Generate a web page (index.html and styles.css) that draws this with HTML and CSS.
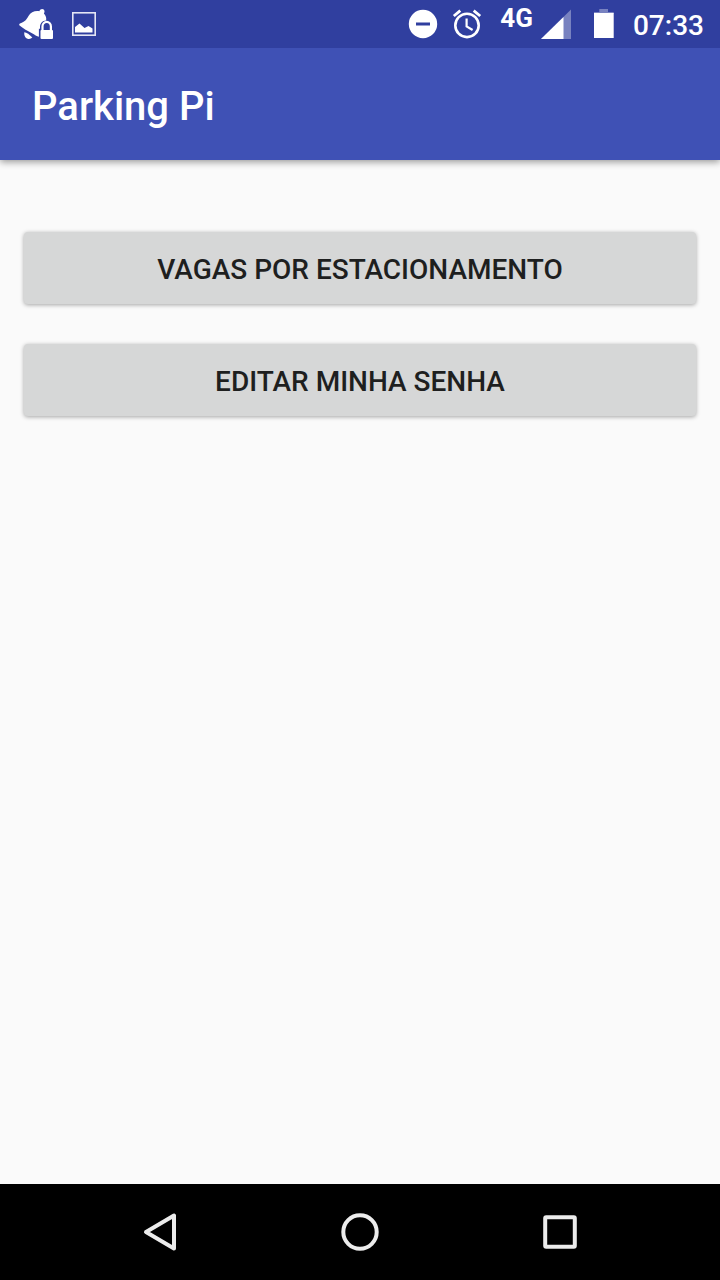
FILE: index.html
```html
<!DOCTYPE html>
<html lang="pt-BR">
<head>
<meta charset="utf-8">
<meta name="viewport" content="width=device-width, initial-scale=1">
<title>Parking Pi</title>
<link rel="stylesheet" href="styles.css">
</head>
<body class="screen">
<div class="status-bar">
  <div class="notifications">
    <svg class="icon-bell" viewBox="18 0 36 48" aria-hidden="true">
      <path fill="#fff" d="M19.300 25.200C19 24.300 19.500 23.600 20.600 23.200C25.500 21.500 26.500 19.500 28.500 16C30.800 12.200 34.500 10.600 39.300 11.200C40.200 9 42.400 8.400 43.700 9.600C44.900 10.800 44.700 12.500 43.900 13.600C46 16 46.600 18.500 46.100 20.400C42.500 20.500 40.300 23 40 26.500V28.700H38.900V36.700C37 36.400 34.500 34.800 32 33.300C28 31 23 28.500 19.300 25.200Z"/>
      <path fill="#fff" d="M24.200 32.200Q28 32.500 32.300 37.600Q30.500 39.500 27.500 38.800Q24 37.600 24.200 32.200Z"/>
      <path fill="none" stroke="#fff" stroke-width="2.200" d="M42.500 31V26.500A4.200 4.600 0 0 1 50.900 26.500V31"/>
      <rect x="40.500" y="30" width="12.500" height="9" rx="1" fill="#fff"/>
    </svg>
    <svg class="icon-picture" viewBox="70 0 28 48" aria-hidden="true">
      <rect x="72.800" y="12.800" width="22.400" height="22.400" fill="none" stroke="#e4e6f5" stroke-width="1.600"/>
      <path fill="#fff" d="M75 32.500V27L79.500 23.500L84.500 28L88.500 26L92.500 28.500V32.500Z"/>
    </svg>
  </div>
  <div class="indicators">
    <svg class="icon-round" viewBox="408 0 30 48" aria-hidden="true">
      <circle cx="423" cy="24" r="14.200" fill="#fff"/>
      <rect x="416" y="22.500" width="14" height="3" fill="#303f9f"/>
    </svg>
    <svg class="icon-round" viewBox="452 0 30 48" aria-hidden="true">
      <g fill="none" stroke="#fff">
        <circle cx="467" cy="25.400" r="11.700" stroke-width="2.600"/>
        <path stroke-width="2.200" d="M466.600 18.500V26.400L472.600 30"/>
        <path stroke-width="2.800" d="M453.800 16L460.300 10.600M480.200 16L473.700 10.600"/>
      </g>
    </svg>
    <span class="network">4G</span>
    <svg class="icon-signal" viewBox="541 0 30 48" aria-hidden="true">
      <path fill="#fff" fill-opacity=".35" d="M571 9.500V39H541Z"/>
      <path fill="#fff" d="M563.500 17V39H541Z"/>
    </svg>
    <svg class="icon-battery" viewBox="593 0 22 48" aria-hidden="true">
      <path fill="#fff" fill-opacity=".35" d="M599.300 9H608V12H613.700V14H594V12H599.300Z"/>
      <rect x="594" y="13" width="19.700" height="25" fill="#fff"/>
    </svg>
    <time class="clock" datetime="07:33">07:33</time>
  </div>
</div>
<header class="app-bar">
  <h1 class="app-title">Parking Pi</h1>
</header>
<main class="content">
  <button class="action" type="button">VAGAS POR ESTACIONAMENTO</button>
  <button class="action" type="button">EDITAR MINHA SENHA</button>
</main>
<nav class="nav-bar" aria-label="Sistema">
  <button class="nav-button" type="button" aria-label="Voltar">
    <svg class="nav-icon" viewBox="0 0 48 48"><path d="M38 7.500V40.500L10 24Z"/></svg>
  </button>
  <button class="nav-button" type="button" aria-label="Início">
    <svg class="nav-icon" viewBox="0 0 48 48"><circle cx="24" cy="24" r="16.700"/></svg>
  </button>
  <button class="nav-button" type="button" aria-label="Recentes">
    <svg class="nav-icon" viewBox="0 0 48 48"><rect x="9.200" y="9.200" width="29.600" height="29.600" rx="1"/></svg>
  </button>
</nav>
</body>
</html>
```
FILE: styles.css
```css
* {
  box-sizing: border-box;
}

.screen {
  display: flex;
  flex-direction: column;
  min-height: 100vh;
  margin: 0;
  background: #fafafa;
  font-family: Roboto, "Noto Sans", sans-serif;
}

.status-bar {
  display: flex;
  justify-content: space-between;
  height: 48px;
  padding: 0 16px 0 18px;
  background: #303f9f;
  color: #fff;
}

.notifications {
  display: flex;
  gap: 16px;
}

.indicators {
  display: flex;
  gap: 14px;
}

.icon-bell {
  width: 36px;
  height: 48px;
}

.icon-picture {
  width: 28px;
  height: 48px;
}

.icon-round,
.icon-signal {
  width: 30px;
  height: 48px;
}

.icon-battery {
  width: 22px;
  height: 48px;
  margin: 0 4px 0 8px;
}

.network {
  margin: 0 -6px 0 4px;
  font-size: 26px;
  font-weight: 700;
  line-height: 36px;
}

.clock {
  font-size: 28px;
  font-weight: 500;
  line-height: 52px;
}

.app-bar {
  position: relative;
  display: flex;
  align-items: center;
  height: 112px;
  padding: 6px 32px 0;
  background: #3f51b5;
  box-shadow: 0 2px 7px rgba(0, 0, 0, 0.4);
  clip-path: inset(0 0 -16px 0);
  color: #fff;
}

.app-title {
  margin: 0;
  font-size: 40px;
  font-weight: 500;
  line-height: 48px;
}

.content {
  display: flex;
  flex: 1;
  flex-direction: column;
  gap: 40px;
  padding: 72px 24px;
}

.action {
  height: 72px;
  padding: 4px 16px 0;
  border: 0;
  border-radius: 4px;
  background: #d6d7d7;
  box-shadow: 0 1px 4px rgba(0, 0, 0, 0.35);
  color: #1e1f1f;
  font-family: inherit;
  font-size: 28px;
  font-weight: 500;
  line-height: 32px;
}

.nav-bar {
  display: flex;
  justify-content: center;
  height: 96px;
  background: #000;
}

.nav-button {
  display: flex;
  flex: 0 1 200px;
  align-items: center;
  justify-content: center;
  padding: 0;
  border: 0;
  background: transparent;
}

.nav-icon {
  width: 48px;
  height: 48px;
  fill: none;
  stroke: #ececec;
  stroke-linejoin: round;
  stroke-width: 4;
}
```
